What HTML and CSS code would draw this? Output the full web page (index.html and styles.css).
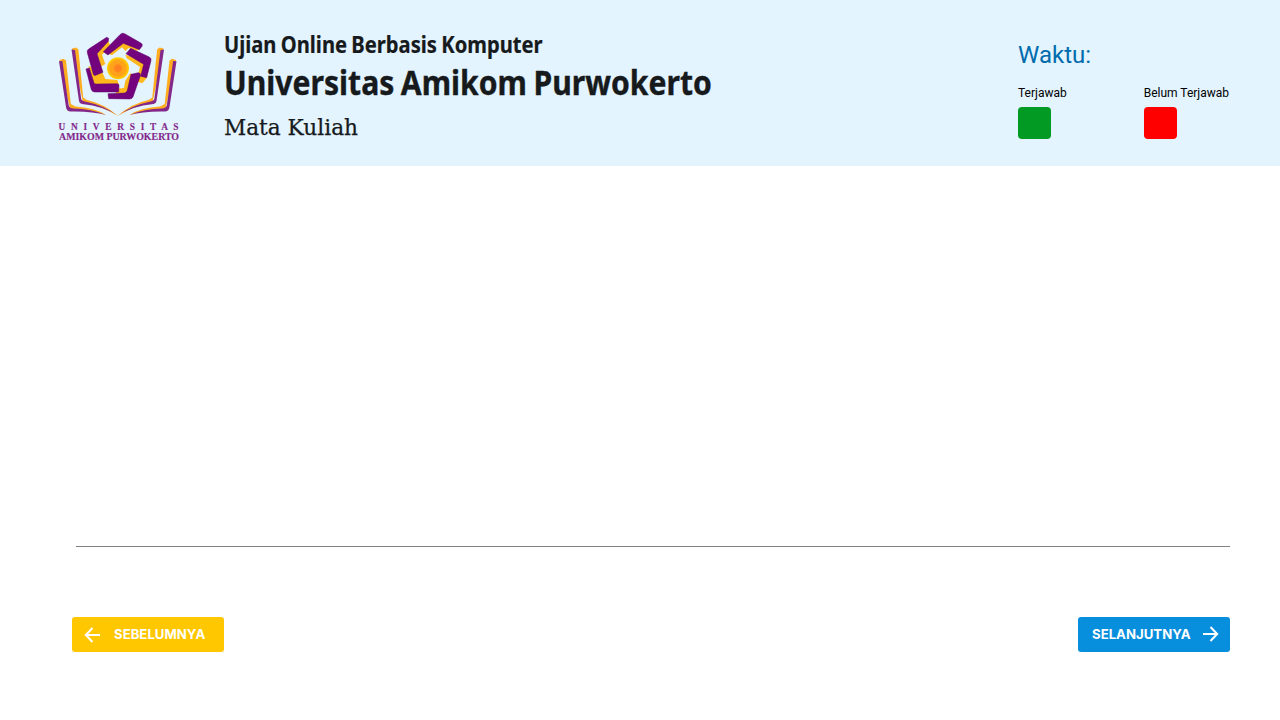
FILE: index.html
```html
<!DOCTYPE html>
<html lang="id">
<head>
<meta charset="utf-8">
<title>Ujian Online Berbasis Komputer</title>
<link rel="stylesheet" href="styles.css">
</head>
<body>
<header class="header">
  <svg class="logo" viewBox="50 25 140 125" role="img" aria-label="Universitas Amikom Purwokerto">
    <defs>
      <g id="book">
        <path fill="#ffad1f" d="M59.5 60L63.5 58.7L66 60.5L70.8 104L75.5 106.5Q95 107.5 106 115Q90 110 70 109Z"/>
        <path fill="#83288a" d="M59 61.3L62.4 61L68.7 105.5Q69.5 108.4 74 108.4Q91 108.4 106 115Q92 111 70 111.5Q66.5 111 66 107Z"/>
        <path fill="#ffad1f" d="M72 48.6L76 47.5L78.4 49.5L83.2 97.5L87 100Q104 103.5 118 116Q102 106 83 103Z"/>
        <path fill="#83288a" d="M71.5 49.5L75 50L81.2 99.3Q82.5 101.5 87 101.9Q105 105.5 118 116Q104 106 82 104Q79.3 103.5 79 101Z"/>
      </g>
      <radialGradient id="sun"><stop offset="0" stop-color="#ff7d21"/><stop offset=".32" stop-color="#ff861c"/><stop offset=".42" stop-color="#ffa11a"/><stop offset=".72" stop-color="#ffa31a"/><stop offset=".88" stop-color="#ffc400"/><stop offset="1" stop-color="#ffce08"/></radialGradient>
    </defs>
    <use href="#book"/>
    <use href="#book" transform="translate(235.5 0) scale(-1 1)"/>
    <g transform="translate(80 28) scale(.3333)">
      <g fill="#ffb81b">
        <path d="M50 76L84 38L92 54L72 74L66 80L76 108L62 116Z"/>
        <path d="M80 74L128 44L182 60L171 68L146 60L136 69L126 58L96 82Z"/>
        <path d="M136 80L140 91L180 117L169 160L187 166L202 148L190 96Z"/>
        <path d="M151 135L136 158L132 180L106 182L108 198L146 200L160 145Z"/>
        <path d="M25 115L36 116L42 136L68 135L76 153L112 156L117 170L40 170Z"/>
      </g>
      <g fill="#74047d" stroke="#5b0268" stroke-width="1.5" stroke-linejoin="round">
        <path d="M80 28L26 63Q20 67 22 74L40 139Q42 144 47 142L69 133L51 77L85 40L86 31Z"/>
        <path d="M70 71L120 20Q127 13 134 17L184 46Q189 50 186 55L178 65L130 46L84 81Z"/>
        <path d="M152 61L208 87Q215 91 213 98L200 149L182 145L191 109L138 77Z"/>
        <path d="M153 139L175 134Q183 135 181 143L159 207Q156 213 149 213L86 212L84 197L134 195Q140 194 142 187Z"/>
        <path d="M18 123L28 120L42 165Q44 169 50 168L112 167Q117 168 117 172L116 192L44 192Q37 192 34 185Z"/>
      </g>
      <circle cx="114" cy="121" r="33" fill="url(#sun)"/>
    </g>
    <g class="logo-text">
      <text x="58.5" y="130.2" font-size="9.3" textLength="120">U N I V E R S I T A S</text>
      <text x="59" y="139.8" font-size="9.8" textLength="120" lengthAdjust="spacingAndGlyphs">AMIKOM PURWOKERTO</text>
    </g>
  </svg>
  <div class="titles">
    <div class="exam"><span>Ujian Online Berbasis Komputer</span></div>
    <h1 class="campus"><span>Universitas Amikom Purwokerto</span></h1>
    <div class="course"><span>Mata Kuliah</span></div>
  </div>
  <div class="status">
    <div class="time">Waktu:</div>
    <div class="legend">
      <div class="legend-item">Terjawab<span class="swatch answered"></span></div>
      <div class="legend-item">Belum Terjawab<span class="swatch unanswered"></span></div>
    </div>
  </div>
</header>
<main class="question"></main>
<footer class="navigation">
  <button class="button previous"><svg class="arrow" viewBox="0 0 16 16"><path d="M16 8H2M8.5 1L1.8 8L8.5 15"/></svg><span>SEBELUMNYA</span></button>
  <button class="button next"><span>SELANJUTNYA</span><svg class="arrow" viewBox="0 0 16 16"><path d="M0 8H14M7.5 1L14.2 8L7.5 15"/></svg></button>
</footer>
</body>
</html>
```
FILE: styles.css
```css
* { box-sizing: border-box; }
body { margin: 0; height: 720px; display: flex; flex-direction: column; background: #fff; font-family: Roboto, sans-serif; overflow: hidden; }
.header { height: 166px; flex: none; display: flex; align-items: flex-start; padding: 25px 50px 0; background: #e3f4ff; }
.logo { width: 140px; height: 125px; flex: none; }
.logo-text { font-family: "Liberation Serif", serif; font-weight: 700; fill: #83288a; stroke: #83288a; stroke-width: .15px; }
.titles { margin-left: 34px; flex: 1; color: #171a1c; white-space: nowrap; }
.titles span { display: inline-block; transform-origin: left; }
.exam { font: 700 22.5px/30px "Noto Sans", sans-serif; margin-top: 5px; word-spacing: -1px; }
.exam span { transform: scaleX(.896); -webkit-text-stroke: .2px #171a1c; }
.campus { font: 700 34.5px/40px "Noto Sans", sans-serif; margin: 2px 0 0; word-spacing: -1.5px; }
.campus span { transform: scaleX(.873); -webkit-text-stroke: .4px #171a1c; }
.course { font: 400 22px/30px "DejaVu Serif", serif; margin-top: 11px; }
.course span { transform: scaleX(.985); -webkit-text-stroke: .25px #171a1c; }
.status { width: 212px; flex: none; }
.time { margin-top: 15px; color: #006bac; font-size: 24px; line-height: 30px; }
.legend { display: flex; justify-content: space-between; margin: 15px 1px 0 0; color: #000; font-size: 12px; line-height: 16px; }
.swatch { display: block; width: 33px; height: 32px; margin-top: 6px; border-radius: 4px; }
.answered { background: #039a23; }
.unanswered { background: #f00; }
.question { height: 381px; flex: none; margin: 0 50px 0 76px; border-bottom: 1px solid #808080; }
.navigation { display: flex; justify-content: space-between; padding: 70px 50px 0 72px; }
.button { display: flex; align-items: center; width: 152px; height: 35px; padding: 0 12px; border: 0; border-radius: 3px; color: #fff; font: 700 13.2px/20px Inter, sans-serif; }
.button span { margin-top: -1px; }
.previous { background: #ffc700; gap: 14px; }
.next { background: #078edc; padding-left: 14px; gap: 12px; }
.arrow { width: 16px; height: 16px; flex: none; fill: none; stroke: #fff; stroke-width: 2; }
.next .arrow { margin-top: -1px; }
```
